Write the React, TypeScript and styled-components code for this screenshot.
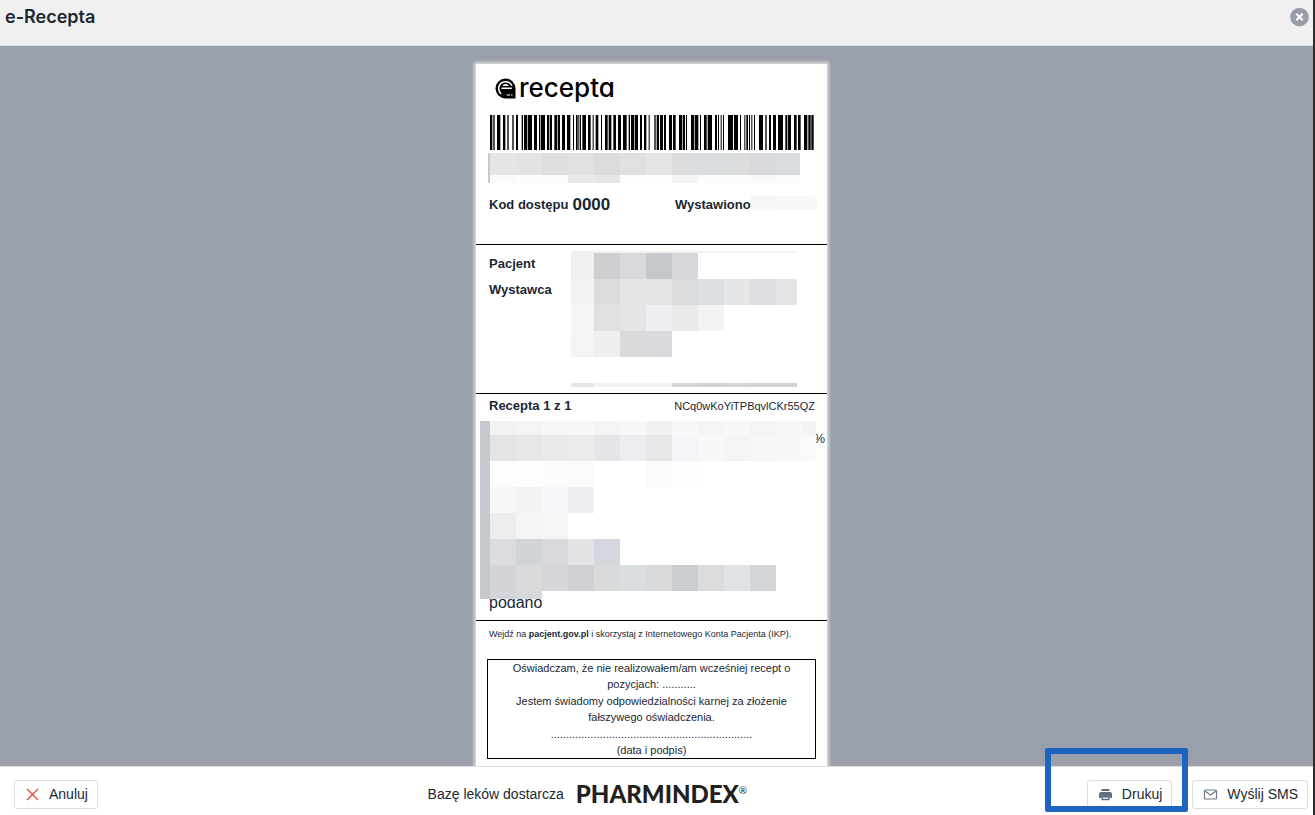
import React from "react";
import styled, { createGlobalStyle } from "styled-components";

const GlobalStyle = createGlobalStyle`
  * { box-sizing: border-box; }
  body {
    margin: 0;
    color: #1b2733;
    font-family: "Liberation Sans", Arial, sans-serif;
    font-size: 14px;
  }
  h1, p { margin: 0; }
`;

const Screen = styled.div`
  display: flex;
  flex-direction: column;
  height: 100vh;
  border-right: 2px solid #2c2c2e;
  background: #fff;
`;

const Header = styled.header`
  display: flex;
  justify-content: space-between;
  align-items: flex-start;
  flex: none;
  height: 46px;
  padding: 7px 4px 0 5px;
  border-bottom: 1px solid #d5dade;
  background: #f0f0f0;
`;

const Title = styled.h1`
  font: 600 18px/20px Inter, sans-serif;
`;

const CloseButton = styled.button`
  display: block;
  width: 19px;
  height: 20px;
  padding: 0;
  border: 0;
  background: none;
`;

const Stage = styled.main`
  display: flex;
  justify-content: center;
  align-items: flex-start;
  flex: 1;
  min-height: 0;
  overflow: hidden;
  padding: 18px 10px 0 0;
  background: #999fab;
`;

const Paper = styled.article`
  flex: none;
  width: 351px;
  padding-bottom: 24px;
  background: #fff;
  box-shadow: 0 0 3px 2px #d9d9d9;
`;

const Section = styled.section`
  position: relative;
  border-bottom: 1px solid #000;
`;

const IssueSection = styled(Section)`
  padding: 10px 10px 26px 12px;
`;

const Logo = styled.div`
  display: flex;
  align-items: center;
  height: 28px;
  padding-left: 7px;
  color: #000;
`;

const LogoText = styled.span`
  margin-left: 3px;
  font: 500 26px/28px Inter, sans-serif;
  font-feature-settings: "cv11";
`;

const Barcode = styled.svg`
  display: block;
  width: 324px;
  height: 35px;
  margin: 13px 0 3px 2px;
`;

const Row = styled.div`
  display: flex;
  align-items: baseline;
  line-height: 26px;
`;

const CodeRow = styled(Row)`
  align-items: center;
  margin-top: 9px;
  padding-left: 1px;
`;

const Label = styled.span`
  font-size: 13px;
  font-weight: bold;
`;

const AccessCode = styled.strong`
  flex: 1;
  margin-left: 4px;
  font-size: 17px;
`;

const IssueDate = styled.div`
  display: flex;
  align-items: flex-start;
  width: 142px;
`;

const PatientSection = styled(Section)`
  display: grid;
  grid-template-columns: 82px 1fr;
  padding: 6px 12px 6px 13px;
`;

const Labels = styled.div`
  display: flex;
  flex-direction: column;
  line-height: 26px;
`;

const PrescriptionSection = styled(Section)`
  padding: 0 4px 7px;
`;

const PrescriptionRow = styled(Row)`
  justify-content: space-between;
  padding: 0 8px 0 9px;
  line-height: 24px;
`;

const Identifier = styled.span`
  font-size: 11px;
`;

const DrugData = styled.div`
  display: flex;
  position: relative;
  z-index: 1;
  margin-top: 3px;
`;

const MaskEdge = styled.div<{ $width: number }>`
  flex: none;
  width: ${(p) => p.$width}px;
  background: #c5c8cd;
`;

const Refund = styled.span`
  position: absolute;
  top: 37px;
  right: 2px;
  font-size: 13px;
  line-height: 16px;
`;

const Dosage = styled.p`
  margin: -6px 0 0 9px;
  font-size: 16px;
  line-height: 20px;
`;

const Note = styled.p`
  padding: 5px 0 17px 13px;
  font-size: 9px;
  line-height: 16px;
  white-space: nowrap;
`;

const Statement = styled.div`
  display: flex;
  flex-direction: column;
  gap: 1px;
  margin: 0 11px;
  border: 1px solid #000;
  font-size: 11px;
  line-height: 16px;
  text-align: center;
`;

const MaskRow = styled.div<{ $height: number }>`
  display: flex;
  height: ${(p) => p.$height}px;
`;

const MaskCell = styled.div<{ $width: number; $color: string }>`
  flex: none;
  width: ${(p) => p.$width}px;
  background: ${(p) => p.$color};
`;

const Masked = styled.div`
  display: flex;
`;

const DateMask = styled.div`
  padding-top: 4px;
`;

const Footer = styled.footer`
  display: flex;
  justify-content: space-between;
  align-items: flex-start;
  flex: none;
  height: 49px;
  padding: 13px 5px 0 14px;
  border-top: 1px solid #dcdfe2;
`;

const Button = styled.button`
  display: flex;
  align-items: center;
  gap: 9px;
  height: 29px;
  padding: 0 9px 1px 10px;
  border: 1px solid #dadde2;
  border-radius: 3px;
  background: #fff;
  color: #1b2733;
  font: 14px/20px "Liberation Sans", Arial, sans-serif;
`;

const Provider = styled.div`
  display: flex;
  align-items: center;
  gap: 12px;
  height: 28px;
  margin-right: 10px;
`;

const Brand = styled.strong`
  color: #231f20;
  font: 900 24px/28px Lato, sans-serif;
`;

const Registered = styled.sup`
  font: 10px/10px Lato, sans-serif;
  vertical-align: 9px;
`;

const Actions = styled.div`
  display: flex;
  gap: 20px;
`;

const Highlighted = styled.div`
  position: relative;
  &::after {
    content: "";
    position: absolute;
    inset: -32px -16px -3px -42px;
    border: 6px solid #1f63c0;
    border-radius: 2px;
    pointer-events: none;
  }
`;

type Line = { h: number; first?: number; cells: string[]; last?: number };

function Mosaic({ lines }: { lines: Line[] }) {
  return (
    <div aria-hidden="true">
      {lines.map((line, i) => (
        <MaskRow key={i} $height={line.h}>
          {line.cells.map((color, j) => (
            <MaskCell
              key={j}
              $color={color}
              $width={j === 0 && line.first ? line.first : j === line.cells.length - 1 && line.last ? line.last : 26}
            />
          ))}
        </MaskRow>
      ))}
    </div>
  );
}

const numberMask: Line[] = [
  { h: 22, last: 24, cells: ["#e5e5e5", "#e2e3e4", "#dddedf", "#e0e1e2", "#dadbdd", "#dfe0e1", "#e3e4e5", "#dcdddf", "#d8dde0", "#dbdcdd", "#d8d9dc", "#d8dcdf"] },
  { h: 8, last: 24, cells: ["#f9fbfa", "#fbfdfc", "#fbfdfc", "#e8eae9", "#e5e6e8", "#fdfdfd", "#fdfdfd", "#f3f3f3", "#fcfcfc", "#fbfbfb", "#f8faf9", "#fafcfb"] },
];

const dateMask: Line[] = [
  { h: 4, last: 14, cells: ["#f4f4f4", "#f7f7f7", "#f9f9f9"] },
  { h: 10, last: 14, cells: ["#f8f8f8", "#f7f7f8", "#f7f7f7"] },
];

const patientMask: Line[] = [
  { h: 2, first: 23, last: 21, cells: Array(9).fill("#f1f1f1") },
  { h: 26, first: 23, cells: ["#f0f0f0", "#cdcecf", "#d8d9dc", "#c4c7cc", "#d7d8dc"] },
  { h: 26, first: 23, last: 21, cells: ["#f2f2f0", "#dbdcdd", "#e5e5e5", "#e3e4e6", "#dadbdc", "#dce0e2", "#e5e6e8", "#dddee2", "#e3e4e5"] },
  { h: 26, first: 23, cells: ["#f5f5f5", "#dfe0e2", "#e3e4e6", "#eeeff2", "#eaeaea", "#f2f3f5"] },
  { h: 26, first: 23, cells: ["#f4f4f4", "#edeff1", "#d9dadc", "#d9dadd"] },
  { h: 26, cells: [] },
  { h: 4, first: 23, last: 21, cells: ["#e5e6e8", "#f2f2f2", "#f2f2f2", "#f2f2f2", "#d4d5d7", "#d0d2d4", "#d4d5d7", "#d2d3d5", "#d2d3d5"] },
];

const drugMask: Line[] = [
  { h: 14, last: 14, cells: ["#f2f2f2", "#f3f4f5", "#f7f7f7", "#f6f7f7", "#f4f4f4", "#f7f7f7", "#f1f1f1", "#f7f8f8", "#f4f4f4", "#f8f8f8", "#f4f4f4", "#f6f7f7", "#f2f3f5"] },
  { h: 26, last: 14, cells: ["#e3e4e5", "#e6e7e8", "#e9ebe9", "#e9ebec", "#e4e5e8", "#ecedf0", "#e6e7e9", "#f4f5f8", "#f8f8f9", "#f4f4f4", "#f5f7f6", "#f8f8f8", "#f8faf9"] },
  { h: 26, cells: ["#fdfdfd", "#fefefe", "#fcfcfc", "#fcfcfc", "#fff", "#fff", "#fbfbfb", "#fdfdfd"] },
  { h: 26, cells: ["#f7f7f7", "#f3f3f3", "#f6f7fa", "#eeeff2"] },
  { h: 26, cells: ["#ebedef", "#f4f4f4", "#f6f6f6"] },
  { h: 26, cells: ["#dbdce0", "#d1d5d8", "#d8d9dc", "#e2e3e4", "#d4d7dd"] },
  { h: 26, cells: ["#d3d4d8", "#d9dadb", "#d5d6da", "#cfd0d4", "#d9dadb", "#d8dde0", "#d8d9da", "#c9cdd0", "#dadbdd", "#dfe3e6", "#d2d6d9"] },
  { h: 8, cells: ["#d2d6dc", "#d7d8da"] },
];

// Bars as [start, end], in thirds of a pixel from the left edge of the code.
const bars: [number, number][] = [
  [0, 7], [10, 14], [21, 31], [39, 46], [52, 56], [67, 71], [78, 84], [95, 99], [102, 112], [114, 126],
  [132, 141], [147, 151], [153, 165], [171, 178], [180, 186], [193, 202], [204, 210], [216, 225], [231, 241],
  [249, 252], [258, 263], [265, 268], [270, 273], [277, 288], [294, 302], [308, 311], [317, 325], [333, 336],
  [345, 353], [356, 364], [370, 378], [384, 393], [399, 410], [416, 420], [423, 433], [435, 444], [450, 456],
  [462, 469], [476, 479], [493, 497], [500, 507], [510, 519], [522, 528], [537, 546], [549, 557], [567, 576],
  [578, 585], [588, 591], [603, 613], [615, 625], [630, 633], [642, 650], [653, 666], [675, 681], [684, 687],
  [692, 695], [699, 702], [714, 729], [732, 744], [750, 753], [763, 766], [769, 774], [777, 780], [784, 787],
  [792, 795], [807, 819], [826, 830], [837, 843], [849, 858], [864, 879], [886, 891], [893, 903], [912, 920],
  [924, 932], [942, 952], [955, 962], [964, 971],
];

export default function App() {
  return (
    <>
      <GlobalStyle />
      <Screen>
        <Header>
          <Title>e-Recepta</Title>
          <CloseButton type="button" aria-label="Zamknij">
            <svg width="19" height="20" viewBox="0 0 19 20">
              <circle cx="9.5" cy="10" r="9.3" fill="#979eaa" />
              <path d="M6.3 6.800l6.400 6.400m0-6.400l-6.400 6.400" stroke="#fff" strokeWidth="2.2" />
            </svg>
          </CloseButton>
        </Header>
        <Stage>
          <Paper>
            <IssueSection>
              <Logo>
                <svg width="21" height="22" viewBox="0 0 21 22" aria-hidden="true">
                  <path d="M10.500 1.500A10 10 0 0 0 10.500 21.500H20.500V11.500A10 10 0 0 0 10.500 1.500z" fill="#000" />
                  <path d="M6.500 11.300H16.800M17 8.800A7 7 0 0 0 3.900 9.800A7.500 7.500 0 0 0 6.200 17" fill="none" stroke="#fff" strokeWidth="1.500" />
                  <path d="M7.300 9a3.800 3.800 0 0 1 6.600 0z" fill="#fff" />
                  <path d="M11.500 18h3.500M16 18h1.500" stroke="#fff" strokeWidth="1" />
                </svg>
                <LogoText>recepta</LogoText>
              </Logo>
              <Barcode viewBox="0 0 972 105" preserveAspectRatio="none" role="img" aria-label="Kod kreskowy">
                {bars.map(([a, b]) => (
                  <rect key={a} x={a} width={b - a} height="105" />
                ))}
              </Barcode>
              <Masked>
                <MaskEdge $width={2} />
                <Mosaic lines={numberMask} />
              </Masked>
              <CodeRow>
                <Label>Kod dostępu</Label>
                <AccessCode>0000</AccessCode>
                <IssueDate>
                  <Label>Wystawiono</Label>
                  <DateMask>
                    <Mosaic lines={dateMask} />
                  </DateMask>
                </IssueDate>
              </CodeRow>
            </IssueSection>
            <PatientSection>
              <Labels>
                <Label>Pacjent</Label>
                <Label>Wystawca</Label>
              </Labels>
              <Mosaic lines={patientMask} />
            </PatientSection>
            <PrescriptionSection>
              <PrescriptionRow>
                <Label>Recepta 1 z 1</Label>
                <Identifier>NCq0wKoYiTPBqvlCKr55QZ</Identifier>
              </PrescriptionRow>
              <Refund>%</Refund>
              <DrugData>
                <MaskEdge $width={10} />
                <Mosaic lines={drugMask} />
              </DrugData>
              <Dosage>podano</Dosage>
            </PrescriptionSection>
            <Note>
              Wejdź na <b>pacjent.gov.pl</b> i skorzystaj z Internetowego Konta Pacjenta (IKP).
            </Note>
            <Statement>
              <p>
                Oświadczam, że nie realizowałem/am wcześniej recept o<br />
                pozycjach: ...........
              </p>
              <p>
                Jestem świadomy odpowiedzialności karnej za złożenie
                <br />
                fałszywego oświadczenia.
              </p>
              <p>
                {".".repeat(66)}
                <br />
                (data i podpis)
              </p>
            </Statement>
          </Paper>
        </Stage>
        <Footer>
          <Button type="button">
            <svg width="15" height="15" viewBox="0 0 15 15" aria-hidden="true">
              <path d="M2 2l11 11M13 2L2 13" stroke="#e8463c" strokeWidth="1.3" />
            </svg>
            Anuluj
          </Button>
          <Provider>
            <span>Bazę leków dostarcza</span>
            <Brand>
              PHARMINDEX<Registered>®</Registered>
            </Brand>
          </Provider>
          <Actions>
            <Highlighted>
              <Button type="button">
                <svg width="15" height="15" viewBox="0 0 15 15" aria-hidden="true">
                  <path d="M3.500 2h8v2h-8zM3 5h9a2 2 0 0 1 2 2v4h-2.500V9h-8v2H1V7a2 2 0 0 1 2-2z" fill="#5f6f7d" />
                  <path d="M4.200 9.700h6.600V12.500H4.200z" fill="#fff" stroke="#5f6f7d" strokeWidth="1.400" />
                </svg>
                Drukuj
              </Button>
            </Highlighted>
            <Button type="button">
              <svg width="15" height="15" viewBox="0 0 15 15" aria-hidden="true">
                <rect x="1.500" y="3" width="12" height="9" rx="1" fill="none" stroke="#6d7c89" strokeWidth="1.200" />
                <path d="M2 4l5.500 4L13 4" fill="none" stroke="#6d7c89" strokeWidth="1.200" />
              </svg>
              Wyślij SMS
            </Button>
          </Actions>
        </Footer>
      </Screen>
    </>
  );
}
